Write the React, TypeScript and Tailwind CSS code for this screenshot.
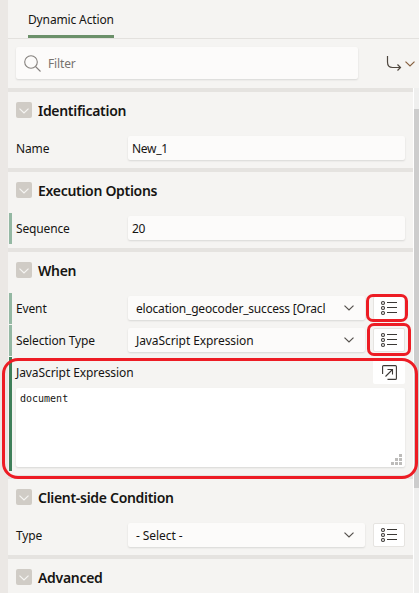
import type { ReactNode } from 'react';

function Chevron({ className = '' }: { className?: string }) {
  return (
    <svg width="10" height="6" viewBox="0 0 10 6" fill="none" stroke="currentColor" strokeWidth="1.2" className={className}>
      <path d="M.5.6 5 5 9.5.6" />
    </svg>
  );
}

function ListButton() {
  return (
    <button className="flex h-6 w-8 shrink-0 items-center justify-center rounded-[2px] border border-[#e6e4e1] bg-white text-[#3b3835]">
      <svg width="18" height="16" viewBox="0 0 18 16" fill="none" stroke="currentColor">
        <g strokeWidth="1.1">
          <circle cx="3" cy="3" r="1.5" />
          <circle cx="3" cy="8" r="1.5" />
          <circle cx="3" cy="13" r="1.5" />
        </g>
        <path d="M7 2.5h10M7 7.5h10M7 12.5h10" />
      </svg>
    </button>
  );
}

function Section({ title, children }: { title: string; children?: ReactNode }) {
  return (
    <section className="border-t-4 border-[#e5e3e0] pb-1">
      <h2 className="flex h-10 items-start pt-[9px] pl-2">
        <span className="mt-px flex h-4 w-4 justify-center rounded-[2px] bg-[#d0ccc6] pt-[6px] text-[#f6f5f3]">
          <Chevron />
        </span>
        <span className="ml-1.5 text-[14px] leading-5 font-semibold tracking-[-0.3px]">{title}</span>
      </h2>
      {children}
    </section>
  );
}

function Row({ label, marked, children }: { label: string; marked?: boolean; children: ReactNode }) {
  return (
    <div className="flex h-8 pr-2">
      <span className={`mt-px ml-px w-[3px] ${marked ? 'bg-[#94b8a3]' : ''}`} />
      <label className="ml-1 w-28 pt-[9px] text-[12px] leading-4 tracking-[-0.14px]">{label}</label>
      <div className="flex flex-1 gap-2 py-1">{children}</div>
    </div>
  );
}

function Field({ value }: { value: string }) {
  return (
    <div className="h-6 flex-1 rounded-[2px] bg-[#fcfbfa] pt-[5px] pl-1 text-[12px] leading-4 tracking-[-0.3px] shadow-[0_1px_2px_rgba(0,0,0,0.12)]">
      {value}
    </div>
  );
}

function SelectField({ value, tight }: { value: string; tight?: boolean }) {
  return (
    <>
      <div className="flex h-6 flex-1 rounded-[2px] bg-[#fcfbfa] pr-[11px] pl-2 text-[12px] leading-4 shadow-[0_1px_2px_rgba(0,0,0,0.12)]">
        <span className={`flex-1 pt-[5px] whitespace-nowrap ${tight ? 'tracking-[-0.19px]' : 'tracking-[-0.08px]'}`}>{value}</span>
        <Chevron className="mt-[9px] text-[#55514d]" />
      </div>
      <ListButton />
    </>
  );
}

export default function App() {
  return (
    <div className="relative flex h-[593px] w-[419px] overflow-hidden bg-[#f5f4f2] font-['Noto_Sans',sans-serif] text-[#161513]">
      <div className="w-2 shrink-0 bg-[#ebe8e5]" />
      <div className="flex min-w-0 flex-1 flex-col">
        <header className="flex h-[39px] shrink-0 border-b border-[#e3e1de] pl-5">
          <div className="h-[38px] w-[86px] border-b-[3px] border-[#6b9069] pt-3 text-[12px] leading-4 tracking-[-0.14px] whitespace-nowrap">Dynamic Action</div>
        </header>
        <div className="flex h-[49px] shrink-0 pt-2 pl-2">
          <div className="flex h-8 w-[342px] items-center rounded-[2px] bg-[#fcfbfa] pl-2 text-[12px] text-[#77736f] shadow-[0_1px_2px_rgba(0,0,0,0.12)]">
            <svg width="17" height="17" viewBox="0 0 17 17" fill="none" stroke="#85817d" strokeWidth="1.1">
              <circle cx="7" cy="7" r="6.3" />
              <path d="m11.5 11.5 5 5" />
            </svg>
            <span className="mt-0.5 ml-[7px] leading-4 tracking-[-0.14px]">Filter</span>
          </div>
          <svg width="16" height="16" viewBox="0 0 16 16" fill="none" stroke="#4e463e" strokeWidth="1.2" className="mt-[9px] ml-[28px]">
            <path d="M1.5 0v6c0 3.6 1.8 5.5 5 5.5h8M11.5 8.5l3 3-3 3" />
          </svg>
          <Chevron className="mt-[14px] ml-[3px] text-[#86603f]" />
        </div>
        <div className="flex min-h-0 flex-1">
          <main className="w-[405px] shrink-0 overflow-hidden">
            <Section title="Identification">
              <Row label="Name"><Field value="New_1" /></Row>
            </Section>
            <Section title="Execution Options">
              <Row label="Sequence" marked><Field value="20" /></Row>
            </Section>
            <Section title="When">
              <Row label="Event" marked><SelectField value="elocation_geocoder_success [Oracl" tight /></Row>
              <Row label="Selection Type" marked><SelectField value="JavaScript Expression" /></Row>
              <div className="flex h-[115px] pr-2">
                <span className="mt-px ml-px w-[3px] bg-[#3f805a]" />
                <div className="ml-1 flex-1">
                  <div className="flex h-8 justify-between">
                    <label className="pt-[9px] text-[12px] leading-4 tracking-[-0.08px]">JavaScript Expression</label>
                    <button className="mt-1 flex h-6 w-8 items-center justify-center rounded-[2px] bg-white text-[#3b3835]">
                      <svg width="15" height="15" viewBox="0 0 15 15" fill="none" stroke="currentColor" strokeWidth="1.1">
                        <path d="M.6 9V1.6q0-1 1-1h11.8q1 0 1 1v11.8q0 1-1 1H5.5M3.5 11.5l7-7M5.5 4.5h5v5" />
                      </svg>
                    </button>
                  </div>
                  <div className="flex h-[79px] justify-between rounded-[2px] bg-white pr-[3px] pl-1 shadow-[0_1px_2px_rgba(0,0,0,0.12)]">
                    <span className="pt-[3px] font-['DejaVu_Sans_Mono',monospace] text-[10px] leading-4">document</span>
                    <svg width="11" height="11" viewBox="0 0 11 11" fill="#bdbcba" className="mt-[66px]">
                      <path d="M8 0h3v3H8zM8 4h3v3H8zM4 4h3v3H4zM8 8h3v3H8zM4 8h3v3H4zM0 8h3v3H0z" />
                    </svg>
                  </div>
                </div>
              </div>
            </Section>
            <Section title="Client-side Condition">
              <Row label="Type"><SelectField value="- Select -" /></Row>
            </Section>
            <Section title="Advanced" />
          </main>
          <div className="flex-1 border-l border-white bg-[#efefee] pt-[21px]">
            <div className="h-[379px] bg-[#cdcdcd]" />
          </div>
        </div>
      </div>
      <div className="pointer-events-none absolute top-[294px] left-[366px] h-7 w-[42px] rounded-[7px] border-[3px] border-[#ed1c24]" />
      <div className="pointer-events-none absolute top-[323px] left-[367px] h-[33px] w-11 rounded-[7px] border-[3px] border-[#ed1c24]" />
      <div className="pointer-events-none absolute top-[358px] left-[2px] h-[121px] w-[416px] rounded-[16px] border-[3px] border-[#ed1c24]" />
    </div>
  );
}
